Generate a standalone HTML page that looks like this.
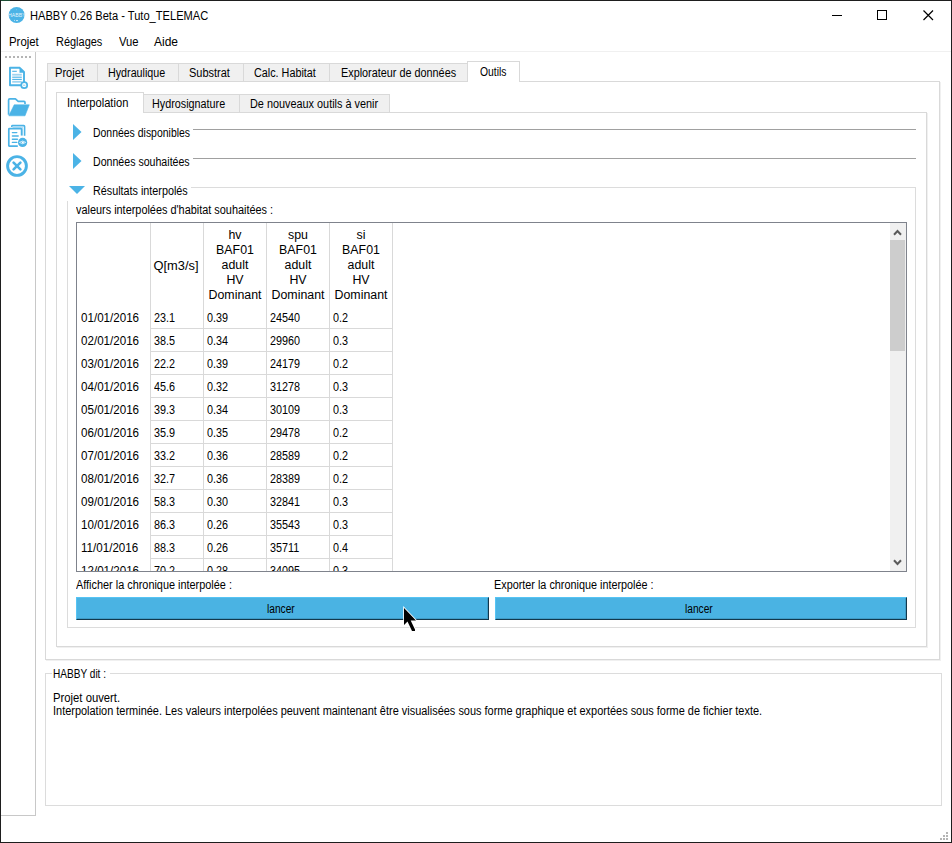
<!DOCTYPE html>
<html><head><meta charset="utf-8">
<style>
*{margin:0;padding:0;box-sizing:border-box}
html,body{width:952px;height:843px;overflow:hidden;background:#fff}
body{position:relative;font-family:"Liberation Sans",sans-serif;font-size:12px;color:#000}
.a{position:absolute}
.t{position:absolute;white-space:nowrap;line-height:15px;height:15px;font-size:12px;transform-origin:0 0}
</style></head><body>
<div class="a" style="left:0px;top:0px;width:952px;height:1px;background:#1e1e1e;"></div>
<div class="a" style="left:0px;top:0px;width:10px;height:1px;background:#1d4f35;"></div>
<div class="a" style="left:0px;top:0px;width:1px;height:843px;background:#1e1e1e;"></div>
<div class="a" style="left:951px;top:0px;width:1px;height:843px;background:#1e1e1e;"></div>
<div class="a" style="left:0px;top:842px;width:952px;height:1px;background:#1e1e1e;"></div>
<svg class="a" style="left:8px;top:7px" width="18" height="17" viewBox="0 0 18 17">
<circle cx="8.6" cy="8" r="8" fill="#4bb3e6"/>
<text x="8.8" y="10" font-family="Liberation Sans" font-size="5.2" fill="#e3f3fb" text-anchor="middle" transform="scale(1,1.1)" transform-origin="8.8 8">HABBY</text>
<circle cx="6.5" cy="13.3" r="0.5" fill="#e3f3fb"/><rect x="8" y="13.2" width="2" height="0.9" fill="#e3f3fb"/>
<circle cx="8.6" cy="2.8" r="0.4" fill="#cfeaf8"/>
</svg>
<div class="t" style="left:30.00px;top:9px;transform:scaleX(0.9259);">HABBY 0.26 Beta - Tuto_TELEMAC</div>
<div class="a" style="left:832px;top:15px;width:10px;height:1px;background:#000;"></div>
<div class="a" style="left:877px;top:10px;width:10px;height:10px;background:transparent;border:1px solid #000"></div>
<svg class="a" style="left:922px;top:9px" width="13" height="13" viewBox="0 0 13 13"><path d="M1.5 1.5L11 11M11 1.5L1.5 11" stroke="#000" stroke-width="1.2"/></svg>
<div class="t" style="left:9.00px;top:35px;transform:scaleX(0.9500);">Projet</div>
<div class="t" style="left:56.00px;top:35px;transform:scaleX(0.9137);">Réglages</div>
<div class="t" style="left:119.00px;top:35px;transform:scaleX(0.9381);">Vue</div>
<div class="t" style="left:154.00px;top:35px;transform:scaleX(1.0000);">Aide</div>
<div class="a" style="left:1px;top:51px;width:950px;height:1px;background:#f0f0f0;"></div>
<div class="a" style="left:35px;top:52px;width:1px;height:764px;background:#c8c8c8;"></div>
<div class="a" style="left:1px;top:815px;width:35px;height:1px;background:#c8c8c8;"></div>
<div class="a" style="left:5px;top:56px;width:2px;height:2px;background:#b4b4b4;"></div>
<div class="a" style="left:9px;top:56px;width:2px;height:2px;background:#b4b4b4;"></div>
<div class="a" style="left:13px;top:56px;width:2px;height:2px;background:#b4b4b4;"></div>
<div class="a" style="left:17px;top:56px;width:2px;height:2px;background:#b4b4b4;"></div>
<div class="a" style="left:21px;top:56px;width:2px;height:2px;background:#b4b4b4;"></div>
<div class="a" style="left:25px;top:56px;width:2px;height:2px;background:#b4b4b4;"></div>
<div class="a" style="left:29px;top:56px;width:2px;height:2px;background:#b4b4b4;"></div>
<svg class="a" style="left:0;top:60px" width="35" height="120" viewBox="0 60 35 120">
<g fill="none" stroke="#4bb3e6" stroke-width="1.9" stroke-linejoin="round">
<path d="M10 67.8H19.8L24 72V85.2H10Z"/>
</g>
<path d="M19.5 67.5L24.8 72.8H19.5Z" fill="#4bb3e6"/>
<g stroke="#4bb3e6" stroke-width="1.1">
<path d="M12.2 71.3H16.8"/>
<path d="M12.2 74.7H21.8" stroke="#9fd4f0" stroke-width="1.8"/>
<path d="M12.2 77.2H21.8"/>
<path d="M12.2 79.4H21.8"/>
<path d="M12.2 81.8H21.8" stroke="#9fd4f0" stroke-width="1.8"/>
</g>
<circle cx="24.2" cy="85.2" r="3" fill="#fff" stroke="#4bb3e6" stroke-width="1.7"/>
<path d="M23 85.2H25.4" stroke="#8fcdee" stroke-width="1"/>
<path d="M8.6 114.8V100Q8.6 98.8 9.8 98.8H15.4L18.2 101.4H24Q25 101.4 25 102.4V104" fill="none" stroke="#4bb3e6" stroke-width="1.7" stroke-linejoin="round"/>
<path d="M14.2 104.8H29.3L25 115.8H8.8Z" fill="#4bb3e6" stroke="#4bb3e6" stroke-width="0.6" stroke-linejoin="round"/>
<path d="M11.8 127V126.2Q11.8 125.6 12.6 125.6H23.8Q24.6 125.6 24.6 126.4V135.8" fill="none" stroke="#4bb3e6" stroke-width="1.6"/>
<path d="M12.6 127.4H22.2V135.6" fill="none" stroke="#b5def4" stroke-width="1.6"/>
<path d="M17.8 146.2H9.2Q8.8 146.2 8.8 145.6V129.2Q8.8 128.6 9.4 128.6H20.8Q21.6 128.6 21.6 129.4V135.6" fill="none" stroke="#4bb3e6" stroke-width="1.7"/>
<g stroke="#4bb3e6" stroke-width="1.4" stroke-linecap="round">
<path d="M12.4 132.6H16.8"/><path d="M12.4 136H18.2"/><path d="M12.4 139.2H17.4"/><path d="M12.4 142.4H16.8"/>
</g>
<circle cx="22.6" cy="142.4" r="4.6" fill="#4bb3e6"/>
<path d="M19.4 142.4Q22.6 139.6 25.8 142.4Q22.6 145.2 19.4 142.4Z" fill="none" stroke="#d6eefa" stroke-width="0.9"/>
<circle cx="22.8" cy="142.4" r="1" fill="#fff"/>
<circle cx="17" cy="166" r="9.4" fill="none" stroke="#4bb3e6" stroke-width="2.9"/>
<path d="M13.6 162.6L20.4 169.4M20.4 162.6L13.6 169.4" stroke="#4bb3e6" stroke-width="2.6" stroke-linecap="round"/>
</svg>
<div class="a" style="left:45px;top:81px;width:895px;height:579px;background:#fff;border:1px solid #d9d9d9"></div>
<div class="a" style="left:940px;top:82px;width:1px;height:579px;background:#f0f0f0;"></div>
<div class="a" style="left:46px;top:660px;width:895px;height:1px;background:#f0f0f0;"></div>
<div class="a" style="left:47px;top:63px;width:51px;height:19px;background:#f0f0f0;border:1px solid #d9d9d9"></div>
<div class="a" style="left:97px;top:63px;width:82px;height:19px;background:#f0f0f0;border:1px solid #d9d9d9"></div>
<div class="a" style="left:178px;top:63px;width:66px;height:19px;background:#f0f0f0;border:1px solid #d9d9d9"></div>
<div class="a" style="left:243px;top:63px;width:87px;height:19px;background:#f0f0f0;border:1px solid #d9d9d9"></div>
<div class="a" style="left:329px;top:63px;width:139px;height:19px;background:#f0f0f0;border:1px solid #d9d9d9"></div>
<div class="a" style="left:467px;top:61px;width:53px;height:21px;background:#fff;border:1px solid #d9d9d9;border-bottom:none"></div>
<div class="t" style="left:55.00px;top:66px;transform:scaleX(0.9250);">Projet</div>
<div class="t" style="left:108.00px;top:66px;transform:scaleX(0.8938);">Hydraulique</div>
<div class="t" style="left:189.00px;top:66px;transform:scaleX(0.9156);">Substrat</div>
<div class="t" style="left:254.00px;top:66px;transform:scaleX(0.9000);">Calc. Habitat</div>
<div class="t" style="left:341.00px;top:66px;transform:scaleX(0.9031);">Explorateur de données</div>
<div class="t" style="left:480.00px;top:65px;transform:scaleX(0.8613);">Outils</div>
<div class="a" style="left:56px;top:112px;width:871px;height:535px;background:#fff;border:1px solid #d9d9d9"></div>
<div class="a" style="left:927px;top:113px;width:1px;height:535px;background:#f0f0f0;"></div>
<div class="a" style="left:57px;top:647px;width:871px;height:1px;background:#f0f0f0;"></div>
<div class="a" style="left:143px;top:94px;width:97px;height:19px;background:#f0f0f0;border:1px solid #d9d9d9"></div>
<div class="a" style="left:239px;top:94px;width:151px;height:19px;background:#f0f0f0;border:1px solid #d9d9d9"></div>
<div class="a" style="left:56px;top:92px;width:88px;height:21px;background:#fff;border:1px solid #d9d9d9;border-bottom:none"></div>
<div class="t" style="left:67.00px;top:96px;transform:scaleX(0.9288);">Interpolation</div>
<div class="t" style="left:152.00px;top:97px;transform:scaleX(0.8988);">Hydrosignature</div>
<div class="t" style="left:250.00px;top:97px;transform:scaleX(0.9057);">De nouveaux outils à venir</div>
<svg class="a" style="left:66px;top:120px" width="24" height="80" viewBox="0 0 24 80">
<path d="M7 4L7 20L15.5 12Z" fill="#4bb3e6"/>
<path d="M7 33L7 49L15.5 41Z" fill="#4bb3e6"/>
</svg>
<div class="t" style="left:93.00px;top:126px;transform:scaleX(0.8712);">Données disponibles</div>
<div class="a" style="left:193px;top:129px;width:723px;height:1px;background:#a0a0a0;"></div>
<div class="t" style="left:93.00px;top:155px;transform:scaleX(0.8835);">Données souhaitées</div>
<div class="a" style="left:193px;top:158px;width:723px;height:1px;background:#a0a0a0;"></div>
<div class="a" style="left:67px;top:187px;width:849px;height:441px;background:transparent;border:1px solid #dcdcdc"></div>
<div class="a" style="left:60px;top:180px;width:131px;height:21px;background:#fff;"></div>
<svg class="a" style="left:66px;top:183px" width="24" height="14" viewBox="0 0 24 14">
<path d="M3 3L19 3L11 11Z" fill="#4bb3e6"/>
</svg>
<div class="t" style="left:93.00px;top:184px;transform:scaleX(0.8990);">Résultats interpolés</div>
<div class="t" style="left:76.00px;top:203px;transform:scaleX(0.9078);">valeurs interpolées d'habitat souhaitées :</div>
<div class="a" style="left:76px;top:222px;width:831px;height:350px;border:1px solid #7f838c;background:#fff;overflow:hidden">
<div class="a" style="left:73px;top:0;width:1px;height:348px;background:#d9d9d9"></div>
<div class="a" style="left:126px;top:0;width:1px;height:348px;background:#d9d9d9"></div>
<div class="a" style="left:189px;top:0;width:1px;height:348px;background:#d9d9d9"></div>
<div class="a" style="left:252px;top:0;width:1px;height:348px;background:#d9d9d9"></div>
<div class="a" style="left:315px;top:0;width:1px;height:348px;background:#d9d9d9"></div>
<div class="a" style="left:73px;top:105px;width:243px;height:1px;background:#d9d9d9"></div>
<div class="a" style="left:73px;top:128px;width:243px;height:1px;background:#d9d9d9"></div>
<div class="a" style="left:73px;top:151px;width:243px;height:1px;background:#d9d9d9"></div>
<div class="a" style="left:73px;top:174px;width:243px;height:1px;background:#d9d9d9"></div>
<div class="a" style="left:73px;top:197px;width:243px;height:1px;background:#d9d9d9"></div>
<div class="a" style="left:73px;top:220px;width:243px;height:1px;background:#d9d9d9"></div>
<div class="a" style="left:73px;top:243px;width:243px;height:1px;background:#d9d9d9"></div>
<div class="a" style="left:73px;top:266px;width:243px;height:1px;background:#d9d9d9"></div>
<div class="a" style="left:73px;top:289px;width:243px;height:1px;background:#d9d9d9"></div>
<div class="a" style="left:73px;top:312px;width:243px;height:1px;background:#d9d9d9"></div>
<div class="a" style="left:73px;top:335px;width:243px;height:1px;background:#d9d9d9"></div>
<div class="t" style="left:73px;width:52px;text-align:center;top:36px;transform:scaleX(1.0700);transform-origin:50% 0">Q[m3/s]</div>
<div class="t" style="left:127px;width:62px;text-align:center;top:5px;transform:scaleX(1.0300);transform-origin:50% 0">hv</div>
<div class="t" style="left:127px;width:62px;text-align:center;top:20px;transform:scaleX(1.0300);transform-origin:50% 0">BAF01</div>
<div class="t" style="left:127px;width:62px;text-align:center;top:35px;transform:scaleX(1.0300);transform-origin:50% 0">adult</div>
<div class="t" style="left:127px;width:62px;text-align:center;top:50px;transform:scaleX(1.0300);transform-origin:50% 0">HV</div>
<div class="t" style="left:127px;width:62px;text-align:center;top:65px;transform:scaleX(1.0300);transform-origin:50% 0">Dominant</div>
<div class="t" style="left:190px;width:62px;text-align:center;top:5px;transform:scaleX(1.0300);transform-origin:50% 0">spu</div>
<div class="t" style="left:190px;width:62px;text-align:center;top:20px;transform:scaleX(1.0300);transform-origin:50% 0">BAF01</div>
<div class="t" style="left:190px;width:62px;text-align:center;top:35px;transform:scaleX(1.0300);transform-origin:50% 0">adult</div>
<div class="t" style="left:190px;width:62px;text-align:center;top:50px;transform:scaleX(1.0300);transform-origin:50% 0">HV</div>
<div class="t" style="left:190px;width:62px;text-align:center;top:65px;transform:scaleX(1.0300);transform-origin:50% 0">Dominant</div>
<div class="t" style="left:253px;width:62px;text-align:center;top:5px;transform:scaleX(1.0300);transform-origin:50% 0">si</div>
<div class="t" style="left:253px;width:62px;text-align:center;top:20px;transform:scaleX(1.0300);transform-origin:50% 0">BAF01</div>
<div class="t" style="left:253px;width:62px;text-align:center;top:35px;transform:scaleX(1.0300);transform-origin:50% 0">adult</div>
<div class="t" style="left:253px;width:62px;text-align:center;top:50px;transform:scaleX(1.0300);transform-origin:50% 0">HV</div>
<div class="t" style="left:253px;width:62px;text-align:center;top:65px;transform:scaleX(1.0300);transform-origin:50% 0">Dominant</div>
<div class="t" style="left:4.00px;top:88px;transform:scaleX(0.9670)">01/01/2016</div>
<div class="t" style="left:77.00px;top:88px;transform:scaleX(0.9000)">23.1</div>
<div class="t" style="left:130.00px;top:88px;transform:scaleX(0.9000)">0.39</div>
<div class="t" style="left:193.00px;top:88px;transform:scaleX(0.9000)">24540</div>
<div class="t" style="left:256.00px;top:88px;transform:scaleX(0.9000)">0.2</div>
<div class="t" style="left:4.00px;top:111px;transform:scaleX(0.9670)">02/01/2016</div>
<div class="t" style="left:77.00px;top:111px;transform:scaleX(0.9000)">38.5</div>
<div class="t" style="left:130.00px;top:111px;transform:scaleX(0.9000)">0.34</div>
<div class="t" style="left:193.00px;top:111px;transform:scaleX(0.9000)">29960</div>
<div class="t" style="left:256.00px;top:111px;transform:scaleX(0.9000)">0.3</div>
<div class="t" style="left:4.00px;top:134px;transform:scaleX(0.9670)">03/01/2016</div>
<div class="t" style="left:77.00px;top:134px;transform:scaleX(0.9000)">22.2</div>
<div class="t" style="left:130.00px;top:134px;transform:scaleX(0.9000)">0.39</div>
<div class="t" style="left:193.00px;top:134px;transform:scaleX(0.9000)">24179</div>
<div class="t" style="left:256.00px;top:134px;transform:scaleX(0.9000)">0.2</div>
<div class="t" style="left:4.00px;top:157px;transform:scaleX(0.9670)">04/01/2016</div>
<div class="t" style="left:77.00px;top:157px;transform:scaleX(0.9000)">45.6</div>
<div class="t" style="left:130.00px;top:157px;transform:scaleX(0.9000)">0.32</div>
<div class="t" style="left:193.00px;top:157px;transform:scaleX(0.9000)">31278</div>
<div class="t" style="left:256.00px;top:157px;transform:scaleX(0.9000)">0.3</div>
<div class="t" style="left:4.00px;top:180px;transform:scaleX(0.9670)">05/01/2016</div>
<div class="t" style="left:77.00px;top:180px;transform:scaleX(0.9000)">39.3</div>
<div class="t" style="left:130.00px;top:180px;transform:scaleX(0.9000)">0.34</div>
<div class="t" style="left:193.00px;top:180px;transform:scaleX(0.9000)">30109</div>
<div class="t" style="left:256.00px;top:180px;transform:scaleX(0.9000)">0.3</div>
<div class="t" style="left:4.00px;top:203px;transform:scaleX(0.9670)">06/01/2016</div>
<div class="t" style="left:77.00px;top:203px;transform:scaleX(0.9000)">35.9</div>
<div class="t" style="left:130.00px;top:203px;transform:scaleX(0.9000)">0.35</div>
<div class="t" style="left:193.00px;top:203px;transform:scaleX(0.9000)">29478</div>
<div class="t" style="left:256.00px;top:203px;transform:scaleX(0.9000)">0.2</div>
<div class="t" style="left:4.00px;top:226px;transform:scaleX(0.9670)">07/01/2016</div>
<div class="t" style="left:77.00px;top:226px;transform:scaleX(0.9000)">33.2</div>
<div class="t" style="left:130.00px;top:226px;transform:scaleX(0.9000)">0.36</div>
<div class="t" style="left:193.00px;top:226px;transform:scaleX(0.9000)">28589</div>
<div class="t" style="left:256.00px;top:226px;transform:scaleX(0.9000)">0.2</div>
<div class="t" style="left:4.00px;top:249px;transform:scaleX(0.9670)">08/01/2016</div>
<div class="t" style="left:77.00px;top:249px;transform:scaleX(0.9000)">32.7</div>
<div class="t" style="left:130.00px;top:249px;transform:scaleX(0.9000)">0.36</div>
<div class="t" style="left:193.00px;top:249px;transform:scaleX(0.9000)">28389</div>
<div class="t" style="left:256.00px;top:249px;transform:scaleX(0.9000)">0.2</div>
<div class="t" style="left:4.00px;top:272px;transform:scaleX(0.9670)">09/01/2016</div>
<div class="t" style="left:77.00px;top:272px;transform:scaleX(0.9000)">58.3</div>
<div class="t" style="left:130.00px;top:272px;transform:scaleX(0.9000)">0.30</div>
<div class="t" style="left:193.00px;top:272px;transform:scaleX(0.9000)">32841</div>
<div class="t" style="left:256.00px;top:272px;transform:scaleX(0.9000)">0.3</div>
<div class="t" style="left:4.00px;top:295px;transform:scaleX(0.9670)">10/01/2016</div>
<div class="t" style="left:77.00px;top:295px;transform:scaleX(0.9000)">86.3</div>
<div class="t" style="left:130.00px;top:295px;transform:scaleX(0.9000)">0.26</div>
<div class="t" style="left:193.00px;top:295px;transform:scaleX(0.9000)">35543</div>
<div class="t" style="left:256.00px;top:295px;transform:scaleX(0.9000)">0.3</div>
<div class="t" style="left:4.00px;top:318px;transform:scaleX(0.9670)">11/01/2016</div>
<div class="t" style="left:77.00px;top:318px;transform:scaleX(0.9000)">88.3</div>
<div class="t" style="left:130.00px;top:318px;transform:scaleX(0.9000)">0.26</div>
<div class="t" style="left:193.00px;top:318px;transform:scaleX(0.9000)">35711</div>
<div class="t" style="left:256.00px;top:318px;transform:scaleX(0.9000)">0.4</div>
<div class="t" style="left:4.00px;top:341px;transform:scaleX(0.9670)">12/01/2016</div>
<div class="t" style="left:77.00px;top:341px;transform:scaleX(0.9000)">70.2</div>
<div class="t" style="left:130.00px;top:341px;transform:scaleX(0.9000)">0.28</div>
<div class="t" style="left:193.00px;top:341px;transform:scaleX(0.9000)">34095</div>
<div class="t" style="left:256.00px;top:341px;transform:scaleX(0.9000)">0.3</div>
<div class="a" style="left:813px;top:0;width:16px;height:348px;background:#f0f0f0"></div>
<div class="a" style="left:813px;top:17px;width:15px;height:111px;background:#cdcdcd"></div>
<svg class="a" style="left:815px;top:4px" width="12" height="9" viewBox="0 0 12 9"><path d="M2 7.8L5.5 4L9 7.8" fill="none" stroke="#5a5a5a" stroke-width="2"/></svg>
<svg class="a" style="left:815px;top:334px" width="12" height="9" viewBox="0 0 12 9"><path d="M2 3.2L5.5 7L9 3.2" fill="none" stroke="#5a5a5a" stroke-width="2"/></svg>
</div>
<div class="t" style="left:76.00px;top:578px;transform:scaleX(0.9070);">Afficher la chronique interpolée :</div>
<div class="t" style="left:494.00px;top:578px;transform:scaleX(0.9028);">Exporter la chronique interpolée :</div>
<div class="a" style="left:76px;top:597px;width:413px;height:23px;background:#4ab3e3;border:1px solid #56c4f4;border-right-color:#13384c;border-bottom-color:#13384c;box-shadow:inset -1px -1px 0 #3f9cc7"></div>
<div class="a" style="left:495px;top:597px;width:412px;height:23px;background:#4ab3e3;border:1px solid #56c4f4;border-right-color:#13384c;border-bottom-color:#13384c;box-shadow:inset -1px -1px 0 #3f9cc7"></div>
<div class="t" style="left:267.00px;top:602px;transform:scaleX(0.8485);">lancer</div>
<div class="t" style="left:685.00px;top:602px;transform:scaleX(0.8485);">lancer</div>
<div class="a" style="left:45px;top:673px;width:897px;height:133px;background:transparent;border:1px solid #dcdcdc"></div>
<div class="a" style="left:52px;top:665px;width:58px;height:15px;background:#fff;"></div>
<div class="t" style="left:53.00px;top:667px;transform:scaleX(0.8397);">HABBY dit :</div>
<div class="t" style="left:53.00px;top:691px;transform:scaleX(0.9408);">Projet ouvert.</div>
<div class="t" style="left:53.00px;top:704px;transform:scaleX(0.9125);">Interpolation terminée. Les valeurs interpolées peuvent maintenant être visualisées sous forme graphique et exportées sous forme de fichier texte.</div>
<div class="a" style="left:946px;top:832px;width:2px;height:2px;background:#b4b4b4;"></div>
<div class="a" style="left:943px;top:835px;width:2px;height:2px;background:#b4b4b4;"></div>
<div class="a" style="left:946px;top:835px;width:2px;height:2px;background:#b4b4b4;"></div>
<div class="a" style="left:940px;top:838px;width:2px;height:2px;background:#b4b4b4;"></div>
<div class="a" style="left:943px;top:838px;width:2px;height:2px;background:#b4b4b4;"></div>
<div class="a" style="left:946px;top:838px;width:2px;height:2px;background:#b4b4b4;"></div>
<svg class="a" style="left:402px;top:606px" width="17" height="27" viewBox="0 0 17 27">
<path d="M2 2V19L5.5 15.5L10 25H13V23.5L8.7 14.5H14Z" fill="#fff" stroke="#fff" stroke-width="1.6" stroke-linejoin="miter"/>
<path d="M2 2V19L5.5 15.5L10 25H13V23.5L8.7 14.5H14Z" fill="#000"/>
</svg>
</body></html>
